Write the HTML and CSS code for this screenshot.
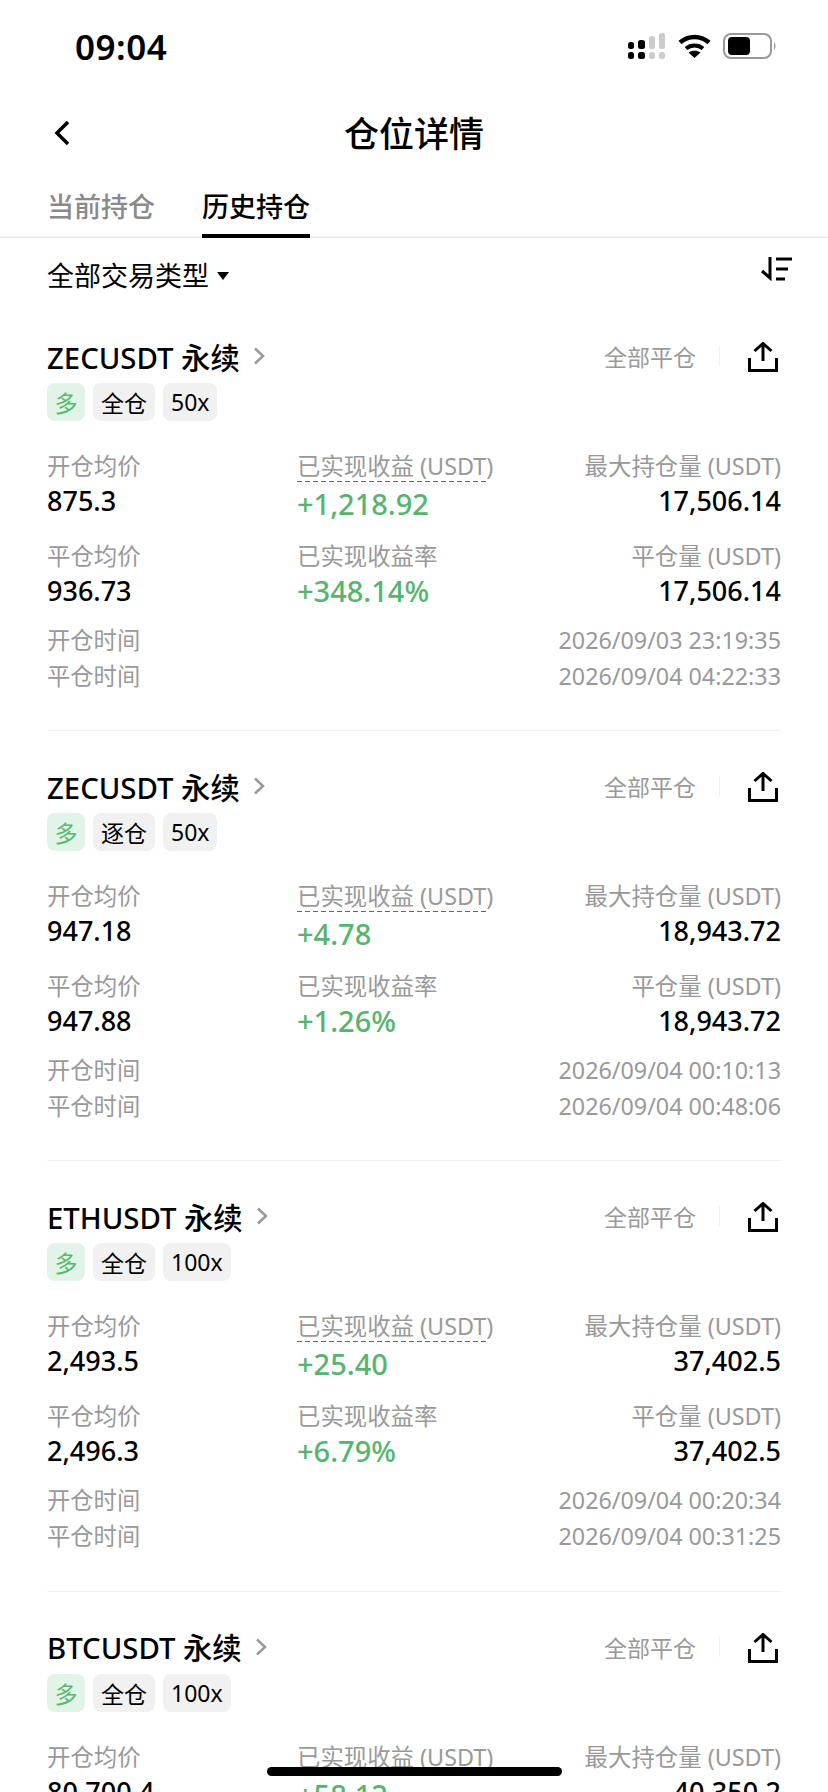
FILE: index.html
```html
<!DOCTYPE html>
<html lang="zh-CN">
<head>
    <meta charset="UTF-8">
    <meta name="viewport" content="width=device-width, initial-scale=1.0">
    <title>仓位详情</title>
    <link rel="stylesheet" href="styles.css">
</head>
<body>
<div class="page">

    <div class="status-bar">
        <span class="time">09:04</span>
        <div class="status-icons">
            <svg class="icon-cell" width="38" height="26" viewBox="0 0 38 26">
                <rect x="0" y="9" width="6" height="7" rx="2.5" fill="#000"/>
                <rect x="10" y="7" width="7" height="9" rx="2.5" fill="#000"/>
                <rect x="21" y="3" width="6" height="13" rx="2.5" fill="#ccc"/>
                <rect x="31" y="0" width="6" height="16" rx="2.5" fill="#ccc"/>
                <rect x="0" y="19" width="6" height="7" rx="2.5" fill="#000"/>
                <rect x="10" y="19" width="7" height="7" rx="2.5" fill="#000"/>
                <rect x="21" y="19" width="6" height="7" rx="2.5" fill="#ccc"/>
                <rect x="31" y="19" width="6" height="7" rx="2.5" fill="#ccc"/>
            </svg>
            <svg class="icon-wifi" width="33" height="24" viewBox="0 0 33 24">
                <path d="M2 8.500C10.500 1 22.500 1 31 8.500" fill="none" stroke="#000" stroke-width="4.500"/>
                <path d="M8 14.500C13 10.500 20 10.500 25 14.500" fill="none" stroke="#000" stroke-width="4"/>
                <path d="M10.500 18.500C14 16 19 16 22.500 18.500L16.500 24Z" fill="#000"/>
            </svg>
            <svg class="icon-battery" width="54" height="26" viewBox="0 0 54 26">
                <rect x="1" y="1" width="47" height="24" rx="7" fill="none" stroke="#999" stroke-width="2"/>
                <rect x="5" y="4" width="22" height="18" rx="4" fill="#000"/>
                <path d="M51 9.500C53 10.500 53 15.500 51 16.500Z" fill="#999"/>
            </svg>
        </div>
    </div>

    <div class="nav-bar">
        <svg class="back" width="16" height="26" viewBox="0 0 16 26">
            <path d="M14 2L3 13L14 24" fill="none" stroke="#000" stroke-width="3.500"/>
        </svg>
        <h1>仓位详情</h1>
    </div>

    <div class="tabs">
        <span class="tab">当前持仓</span>
        <span class="tab active">历史持仓</span>
    </div>

    <div class="filter-row">
        <span class="filter">全部交易类型<i class="caret"></i></span>
        <svg class="sort" width="32" height="24" viewBox="0 0 32 24">
            <path d="M10 0V21L2 14" fill="none" stroke="#000" stroke-width="3"/>
            <path d="M16 2H32M16 12H28M16 22H25" fill="none" stroke="#000" stroke-width="3"/>
        </svg>
    </div>

    <div class="card">
        <div class="card-head">
            <span class="symbol">ZECUSDT 永续</span>
            <svg class="chevron" width="12" height="18" viewBox="0 0 12 18"><path d="M2 1.500L10 9L2 16.500" fill="none" stroke="#999" stroke-width="2.500"/></svg>
            <span class="close-all">全部平仓</span>
            <i class="sep"></i>
            <svg class="share" width="30" height="30" viewBox="0 0 30 30"><path d="M6.500 9L15 1.500L23.500 9M15 2V19M1.500 16V28.500H28.500V16" fill="none" stroke="#000" stroke-width="3"/></svg>
        </div>
        <div class="tags"><span class="tag long">多</span><span class="tag">全仓</span><span class="tag">50x</span></div>
        <div class="stats">
            <div><p class="label">开仓均价</p><p class="value">875.3</p></div>
            <div><p class="label"><span class="dashed">已实现收益 (USDT)</span></p><p class="value green">+1,218.92</p></div>
            <div class="right"><p class="label">最大持仓量 (USDT)</p><p class="value">17,506.14</p></div>
            <div><p class="label">平仓均价</p><p class="value">936.73</p></div>
            <div><p class="label">已实现收益率</p><p class="value green rate">+348.14%</p></div>
            <div class="right"><p class="label">平仓量 (USDT)</p><p class="value">17,506.14</p></div>
        </div>
        <div class="time-row"><span>开仓时间</span><span>2026/09/03 23:19:35</span></div>
        <div class="time-row"><span>平仓时间</span><span>2026/09/04 04:22:33</span></div>
    </div>

    <div class="card">
        <div class="card-head">
            <span class="symbol">ZECUSDT 永续</span>
            <svg class="chevron" width="12" height="18" viewBox="0 0 12 18"><path d="M2 1.500L10 9L2 16.500" fill="none" stroke="#999" stroke-width="2.500"/></svg>
            <span class="close-all">全部平仓</span>
            <i class="sep"></i>
            <svg class="share" width="30" height="30" viewBox="0 0 30 30"><path d="M6.500 9L15 1.500L23.500 9M15 2V19M1.500 16V28.500H28.500V16" fill="none" stroke="#000" stroke-width="3"/></svg>
        </div>
        <div class="tags"><span class="tag long">多</span><span class="tag">逐仓</span><span class="tag">50x</span></div>
        <div class="stats">
            <div><p class="label">开仓均价</p><p class="value">947.18</p></div>
            <div><p class="label"><span class="dashed">已实现收益 (USDT)</span></p><p class="value green">+4.78</p></div>
            <div class="right"><p class="label">最大持仓量 (USDT)</p><p class="value">18,943.72</p></div>
            <div><p class="label">平仓均价</p><p class="value">947.88</p></div>
            <div><p class="label">已实现收益率</p><p class="value green rate">+1.26%</p></div>
            <div class="right"><p class="label">平仓量 (USDT)</p><p class="value">18,943.72</p></div>
        </div>
        <div class="time-row"><span>开仓时间</span><span>2026/09/04 00:10:13</span></div>
        <div class="time-row"><span>平仓时间</span><span>2026/09/04 00:48:06</span></div>
    </div>

    <div class="card">
        <div class="card-head">
            <span class="symbol">ETHUSDT 永续</span>
            <svg class="chevron" width="12" height="18" viewBox="0 0 12 18"><path d="M2 1.500L10 9L2 16.500" fill="none" stroke="#999" stroke-width="2.500"/></svg>
            <span class="close-all">全部平仓</span>
            <i class="sep"></i>
            <svg class="share" width="30" height="30" viewBox="0 0 30 30"><path d="M6.500 9L15 1.500L23.500 9M15 2V19M1.500 16V28.500H28.500V16" fill="none" stroke="#000" stroke-width="3"/></svg>
        </div>
        <div class="tags"><span class="tag long">多</span><span class="tag">全仓</span><span class="tag">100x</span></div>
        <div class="stats">
            <div><p class="label">开仓均价</p><p class="value">2,493.5</p></div>
            <div><p class="label"><span class="dashed">已实现收益 (USDT)</span></p><p class="value green">+25.40</p></div>
            <div class="right"><p class="label">最大持仓量 (USDT)</p><p class="value">37,402.5</p></div>
            <div><p class="label">平仓均价</p><p class="value">2,496.3</p></div>
            <div><p class="label">已实现收益率</p><p class="value green rate">+6.79%</p></div>
            <div class="right"><p class="label">平仓量 (USDT)</p><p class="value">37,402.5</p></div>
        </div>
        <div class="time-row"><span>开仓时间</span><span>2026/09/04 00:20:34</span></div>
        <div class="time-row"><span>平仓时间</span><span>2026/09/04 00:31:25</span></div>
    </div>

    <div class="card">
        <div class="card-head">
            <span class="symbol">BTCUSDT 永续</span>
            <svg class="chevron" width="12" height="18" viewBox="0 0 12 18"><path d="M2 1.500L10 9L2 16.500" fill="none" stroke="#999" stroke-width="2.500"/></svg>
            <span class="close-all">全部平仓</span>
            <i class="sep"></i>
            <svg class="share" width="30" height="30" viewBox="0 0 30 30"><path d="M6.500 9L15 1.500L23.500 9M15 2V19M1.500 16V28.500H28.500V16" fill="none" stroke="#000" stroke-width="3"/></svg>
        </div>
        <div class="tags"><span class="tag long">多</span><span class="tag">全仓</span><span class="tag">100x</span></div>
        <div class="stats">
            <div><p class="label">开仓均价</p><p class="value">80,700.4</p></div>
            <div><p class="label"><span class="dashed">已实现收益 (USDT)</span></p><p class="value green">+58.12</p></div>
            <div class="right"><p class="label">最大持仓量 (USDT)</p><p class="value">40,350.2</p></div>
        </div>
    </div>

    <div class="home-bar"></div>
</div>
</body>
</html>
```

FILE: styles.css
```css
* {
    box-sizing: border-box;
}
body {
    margin: 0;
    background-color: #fff;
    color: #000;
    font-family: "Noto Sans", "Noto Sans CJK SC", sans-serif;
}
p, h1 {
    margin: 0;
    font-weight: 400;
}
.page {
    position: relative;
    width: 828px;
    height: 1792px;
    overflow: hidden;
}

.status-bar {
    display: flex;
    justify-content: space-between;
    align-items: center;
    height: 92px;
    padding: 0 51px 0 75px;
}
.time {
    font-size: 35px;
    font-weight: 600;
    letter-spacing: 0.5px;
}
.status-icons {
    display: flex;
    align-items: center;
    gap: 12px;
}

.nav-bar {
    position: relative;
    display: flex;
    justify-content: center;
    align-items: center;
    height: 78px;
}
.nav-bar h1 {
    font-size: 35px;
    font-weight: 500;
}
.back {
    position: absolute;
    left: 54px;
    top: 28px;
}

.tabs {
    display: flex;
    gap: 47px;
    height: 68px;
    padding: 0 47px;
    border-bottom: 2px solid #eee;
}
.tab {
    height: 68px;
    padding-top: 18px;
    font-size: 27px;
    line-height: 38px;
    font-weight: 500;
    color: #8a8a8a;
}
.tab.active {
    color: #000;
    border-bottom: 4px solid #000;
}

.filter-row {
    display: flex;
    justify-content: space-between;
    align-items: flex-start;
    height: 63px;
    padding: 19px 36px 0 47px;
}
.filter {
    display: flex;
    align-items: center;
    font-size: 27px;
    line-height: 38px;
}
.caret {
    width: 0;
    height: 0;
    margin-left: 8px;
    border-left: 6px solid transparent;
    border-right: 6px solid transparent;
    border-top: 8px solid #000;
}

.card {
    height: 430.200px;
    margin: 0 47px;
    padding-top: 37px;
    border-bottom: 1px solid #f2f2f2;
}
.card-head {
    display: flex;
    align-items: center;
    height: 36px;
}
.symbol {
    font-size: 29.300px;
    font-weight: 500;
}
.chevron {
    margin-left: 13px;
}
.close-all {
    margin-left: auto;
    font-size: 23px;
    color: #999;
}
.sep {
    width: 1px;
    height: 20px;
    margin: 0 28px 0 23px;
    background-color: #f0f0f0;
}
.share {
    margin: 2px 3px 0 0;
}

.tags {
    display: flex;
    gap: 8px;
    margin-top: 9px;
}
.tag {
    display: flex;
    align-items: center;
    height: 38px;
    padding: 0 8px;
    border-radius: 8px;
    background-color: #f1f1f1;
    font-size: 23px;
}
.tag.long {
    padding: 0 7.500px;
    background-color: #e2f4e7;
    color: #58b872;
}

.stats {
    display: grid;
    grid-template-columns: 250px 1fr auto;
    row-gap: 20px;
    margin-top: 28px;
}
.label {
    height: 34px;
    font-size: 23.400px;
    line-height: 34px;
    color: #999;
    white-space: nowrap;
}
/* the dashes stop a little short of the closing bracket */
.dashed {
    display: inline-block;
    width: 191px;
    height: 33px;
    background: repeating-linear-gradient(90deg, #666 0 5px, transparent 5px 8px) left bottom / 100% 1.500px no-repeat;
}
.value {
    height: 36px;
    font-size: 27px;
    line-height: 36px;
    font-weight: 500;
}
.value.green {
    font-size: 29px;
    line-height: 42px;
    color: #55b56e;
}
.value.green.rate {
    line-height: 36px;
}
.right {
    text-align: right;
}

.time-row {
    display: flex;
    justify-content: space-between;
    height: 35.500px;
    font-size: 23.300px;
    line-height: 35px;
    color: #999;
}
.stats + .time-row {
    margin-top: 14px;
}

.home-bar {
    position: absolute;
    left: 267px;
    top: 1767px;
    width: 295px;
    height: 9px;
    border-radius: 5px;
    background-color: #000;
}
```
